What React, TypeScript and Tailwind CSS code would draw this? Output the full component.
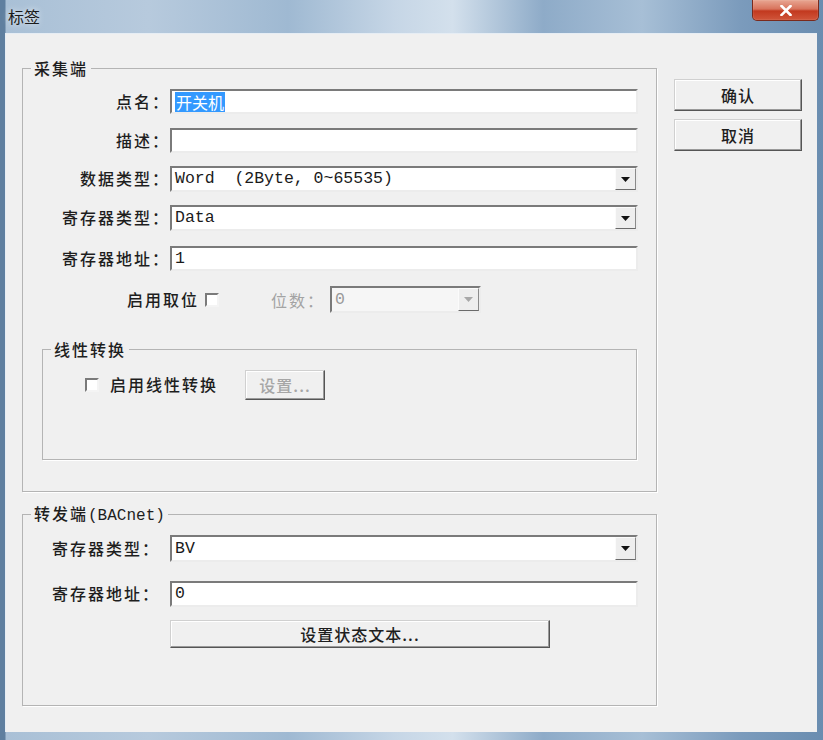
import React from "react";

function Arrow({ disabled }: { disabled?: boolean }) {
  return (
    <div className="flex h-full w-[21px] items-center justify-center border border-t-[#fbfbfb] border-l-[#fbfbfb] border-r-[#8a8a8a] border-b-[#6a6a6a] bg-[#eeeeee]">
      <svg width="9" height="5" viewBox="0 0 9 5">
        <polygon points="0,0 9,0 4.5,5" fill={disabled ? "#a8a8a8" : "#111"} />
      </svg>
    </div>
  );
}

function Label({ children }: { children: React.ReactNode }) {
  return (
    <span className="font-['Noto_Sans_CJK_SC',sans-serif] text-[16px] leading-[20px] tracking-[2px] font-medium text-[#1e1e1e] whitespace-nowrap">
      {children}
    </span>
  );
}

function Box({ children, h, select, disabled, wide }: { children?: React.ReactNode; h: string; select?: boolean; disabled?: boolean; wide?: boolean }) {
  return (
    <div
      className={
        "flex shrink-0 items-stretch border-2 border-t-[#7a7a7a] border-l-[#7a7a7a] border-r-[#ececec] border-b-[#ececec] " +
        (disabled ? "bg-[#f6f6f6] " : "bg-white ") +
        (wide ? "w-[468px] " : "w-[151px] ") +
        h
      }
    >
      <div className="flex flex-1 items-center pl-[3px] font-['Liberation_Mono','Noto_Sans_CJK_SC',monospace] text-[16.5px] leading-[20px] text-[#1a1a1a] whitespace-pre">
        {children}
      </div>
      {select && <Arrow disabled={disabled} />}
    </div>
  );
}

function Check() {
  return <div className="h-[14px] w-[14px] border-2 border-t-[#7a7a7a] border-l-[#7a7a7a] border-r-[#f4f4f4] border-b-[#f4f4f4] bg-white" />;
}

function Btn({ children, cls, disabled }: { children: React.ReactNode; cls: string; disabled?: boolean }) {
  return (
    <div
      className={
        "flex shrink-0 items-center justify-center border border-t-[#d0d0d0] border-l-[#d0d0d0] border-r-[#555555] border-b-[#555555] bg-[#f0f0f0] shadow-[inset_-1px_-1px_0_#9a9a9a,inset_1px_1px_0_#ffffff] font-['Noto_Sans_CJK_SC',sans-serif] text-[16px] leading-[20px] tracking-[1px] font-medium whitespace-nowrap " +
        (disabled ? "text-[#a6a6a6] " : "text-[#1e1e1e] ") +
        cls
      }
    >
      {children}
    </div>
  );
}

export default function App() {
  return (
    <div className="flex h-[740px] w-[823px] flex-col overflow-hidden bg-[linear-gradient(90deg,#5f7f9f_0px,#5f7f9f_5px,#a9c0d6_6px,#b7cadd_18%,#9fb9d2_35%,#c6d6e6_48%,#d3e0ec_55%,#8eabc8_66%,#a7bfd6_78%,#7b9bbc_90%,#6a8db0_100%)]">
      {/* title bar */}
      <div className="flex h-[33px] items-start justify-between pr-[4px]">
        <div className="pl-[8px] pt-[6px] font-['Noto_Sans_CJK_SC',sans-serif] text-[16px] leading-[20px] text-[#1b1b1b] [text-shadow:0_0_6px_rgba(255,255,255,0.9)]">
          标签
        </div>
        <div className="flex h-[21px] w-[67px] items-center justify-center rounded-b-[5px] border border-t-0 border-[#7a2a1c] bg-[linear-gradient(180deg,#e8a692_0%,#d8735c_45%,#c2391f_55%,#d0553a_100%)] shadow-[inset_0_0_1px_rgba(255,255,255,0.7)]">
          <svg width="12" height="11" viewBox="0 0 12 11">
            <path d="M1.5 1 L10.5 10 M10.5 1 L1.5 10" stroke="#ffffff" strokeWidth="2.6" strokeLinecap="square" />
          </svg>
        </div>
      </div>

      {/* client area */}
      <div className="ml-[5px] mr-[6px] flex h-[699px] gap-[17px] border-t border-l border-[#e6edf4] bg-[#f0f0f0] pl-[16px] pt-[24px]">
        <div className="flex w-[635px] flex-col">
          {/* 采集端 */}
          <fieldset className="border border-[#b4b4b4] shadow-[1px_1px_0_#ffffff]">
            <legend className="ml-[8px] block px-[3px] leading-[20px]">
              <Label>采集端</Label>
            </legend>
            <div className="flex flex-col pb-[31px] pt-[10px]">
              <div className="flex items-center">
                <div className="w-[147px] text-right"><Label>点名：</Label></div>
                <Box h="h-[25px]" wide>
                  <span className="bg-[#3399ff] px-[1px] font-['Noto_Sans_CJK_SC',sans-serif] text-[16px] text-white">开关机</span>
                </Box>
              </div>
              <div className="mt-[14px] flex items-center">
                <div className="w-[147px] text-right"><Label>描述：</Label></div>
                <Box h="h-[25px]" wide />
              </div>
              <div className="mt-[13px] flex items-center">
                <div className="w-[147px] text-right"><Label>数据类型：</Label></div>
                <Box h="h-[26px]" wide select>{"Word  (2Byte, 0~65535)"}</Box>
              </div>
              <div className="mt-[13px] flex items-center">
                <div className="w-[147px] text-right"><Label>寄存器类型：</Label></div>
                <Box h="h-[26px]" wide select>Data</Box>
              </div>
              <div className="mt-[15px] flex items-center">
                <div className="w-[147px] text-right"><Label>寄存器地址：</Label></div>
                <Box h="h-[25px]" wide>1</Box>
              </div>
              <div className="mt-[15px] flex items-center">
                <div className="ml-[104px]"><Label>启用取位</Label></div>
                <div className="ml-[6px]"><Check /></div>
                <span className="ml-[52px] font-['Noto_Sans_CJK_SC',sans-serif] text-[16px] leading-[20px] tracking-[2px] text-[#a3a3a3]">位数：</span>
                <div className="ml-[5px]">
                  <Box h="h-[27px]" select disabled>
                    <span className="text-[#9a9a9a]">0</span>
                  </Box>
                </div>
              </div>

              {/* 线性转换 */}
              <fieldset className="ml-[19px] mr-[19px] mt-[26px] border border-[#b4b4b4] shadow-[1px_1px_0_#ffffff]">
                <legend className="ml-[8px] block px-[3px] leading-[20px]">
                  <Label>线性转换</Label>
                </legend>
                <div className="flex items-center pb-[59px] pt-[10px]">
                  <div className="ml-[42px]"><Check /></div>
                  <div className="ml-[11px]"><Label>启用线性转换</Label></div>
                  <Btn cls="ml-[27px] h-[30px] w-[80px]" disabled>设置...</Btn>
                </div>
              </fieldset>
            </div>
          </fieldset>

          {/* 转发端 */}
          <fieldset className="mt-[11px] border border-[#b4b4b4] shadow-[1px_1px_0_#ffffff]">
            <legend className="ml-[8px] block px-[3px] leading-[20px]">
              <span className="font-['Liberation_Mono','Noto_Sans_CJK_SC',monospace] text-[16px] leading-[20px] font-medium text-[#1e1e1e]">
                <span className="font-['Noto_Sans_CJK_SC',sans-serif] tracking-[2px]">转发端</span>(BACnet)
              </span>
            </legend>
            <div className="flex flex-col pb-[57px] pt-[9px]">
              <div className="flex items-center">
                <div className="w-[137px] text-right"><Label>寄存器类型：</Label></div>
                <div className="ml-[10px]"><Box h="h-[27px]" wide select>BV</Box></div>
              </div>
              <div className="mt-[19px] flex items-center">
                <div className="w-[137px] text-right"><Label>寄存器地址：</Label></div>
                <div className="ml-[10px]"><Box h="h-[26px]" wide>0</Box></div>
              </div>
              <Btn cls="ml-[147px] mt-[13px] h-[28px] w-[380px]">设置状态文本...</Btn>
            </div>
          </fieldset>
        </div>

        {/* buttons */}
        <div className="flex flex-col gap-[8px] pt-[21px]">
          <Btn cls="h-[32px] w-[128px]">确认</Btn>
          <Btn cls="h-[32px] w-[128px]">取消</Btn>
        </div>
      </div>
    </div>
  );
}
